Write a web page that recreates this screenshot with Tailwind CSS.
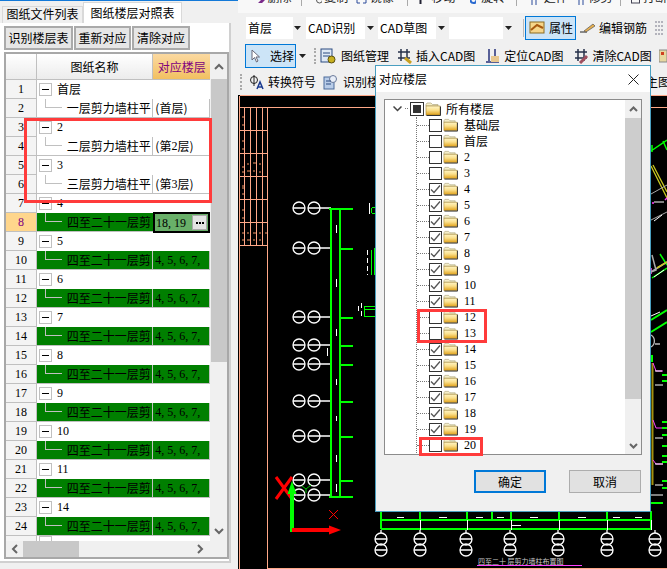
<!DOCTYPE html>
<html lang="zh">
<head>
  <meta charset="UTF-8" />
  <title>对应楼层</title>
  <script src="https://cdn.jsdelivr.net/npm/@tailwindcss/browser@4"></script>
</head>
<body class="w-[667px] h-[569px] overflow-hidden bg-[#f0f0f0] text-black text-[12px] leading-[14px] font-['Noto_Sans_CJK_SC',sans-serif]">

  <svg class="absolute w-0 h-0">
    <defs>
      <linearGradient id="fold" x1="0" y1="0" x2="0" y2="1">
        <stop offset="0" stop-color="#fff6c8" />
        <stop offset=".45" stop-color="#fbe08c" />
        <stop offset="1" stop-color="#e0a018" />
      </linearGradient>
      <symbol id="folder" viewBox="0 0 16 14">
        <path d="M1 2.500 L2 1 H6 L7.500 2.500 H13 V4 H1Z" fill="#f6eec8" stroke="#b0a880" stroke-width=".7" />
        <rect x="1" y="4" width="14" height="9" fill="url(#fold)" stroke="#a08030" stroke-width=".6" />
        <path d="M15.500 4.500 V13.500 H1.500" fill="none" stroke="#333" stroke-width="1" />
      </symbol>
    </defs>
  </svg>

  <div class="flex h-[569px]">

    <!-- left panel -->
    <div class="w-[238px] shrink-0 flex flex-col">
      <div class="h-px bg-[#1379d8] mb-px"></div>
      <div class="flex h-[21px] pl-[2px] items-end">
        <div class="w-[81px] h-[17px] bg-[#f0f0f0] border border-b-0 border-[#d9d9d9] text-center">图纸文件列表</div>
        <div class="w-[99px] h-[21px] bg-white border border-b-0 border-[#d9d9d9] text-center pt-[3px]">图纸楼层对照表</div>
      </div>
      <div class="w-[231px] h-[540px] border-r-2 border-b-2 border-[#d0d0d0] bg-white px-[4px] flex flex-col">
        <div class="flex gap-px h-[24px] mt-[3px] mb-[2px]">
          <div class="w-[69px] flex items-center justify-center bg-[#e6e6e6] border-2 border-[#aaaaaa]">识别楼层表</div>
          <div class="w-[57px] flex items-center justify-center bg-[#e6e6e6] border-2 border-[#aaaaaa]">重新对应</div>
          <div class="w-[58px] flex items-center justify-center bg-[#e6e6e6] border-2 border-[#aaaaaa]">清除对应</div>
        </div>
        <div class="w-[225px] h-[507px] border-2 border-[#a8a8a8] flex flex-col bg-[#f0f0f0]">
          <div class="flex h-[487px]">
            <div class="w-[205px] flex flex-col overflow-hidden bg-white">
              <div class="flex h-[26px] shrink-0 border-b border-[#c0c0c0]">
                <div class="w-[31px] border-r border-[#c0c0c0] bg-gradient-to-b from-white to-[#ececec]"></div>
                <div class="w-[117px] flex items-center justify-center border-r border-[#c0c0c0] bg-gradient-to-b from-white to-[#ececec]">图纸名称</div>
                <div class="w-[57px] flex items-center justify-center text-[#800080] bg-gradient-to-b from-[#fbd9a0] to-[#f2c060]">对应楼层</div>
              </div>
              <div id="rows"></div>
            </div>
            <div class="w-[16px] ml-px flex flex-col">
              <div class="h-[25px] flex items-center justify-center bg-[#f0f0f0]">
                <svg width="10" height="7" viewBox="0 0 10 7"><path d="M1 6 L5 2 L9 6" fill="none" stroke="#666" stroke-width="2" /></svg>
              </div>
              <div class="h-[283px] bg-[#c8c8c8]"></div>
              <div class="flex-1 flex items-end justify-center pb-[6px]">
                <svg width="10" height="7" viewBox="0 0 10 7"><path d="M1 1 L5 5 L9 1" fill="none" stroke="#666" stroke-width="2" /></svg>
              </div>
            </div>
          </div>
          <div class="flex items-center h-[16px] w-[205px]">
            <div class="w-[17px] flex justify-center">
              <svg width="7" height="10" viewBox="0 0 7 10"><path d="M6 1 L2 5 L6 9" fill="none" stroke="#666" stroke-width="2" /></svg>
            </div>
            <div class="w-[56px] h-full bg-[#c8c8c8]"></div>
            <div class="flex-1 flex justify-end pr-[7px]">
              <svg width="7" height="10" viewBox="0 0 7 10"><path d="M1 1 L5 5 L1 9" fill="none" stroke="#666" stroke-width="2" /></svg>
            </div>
          </div>
        </div>
      </div>
    </div>

    <!-- right side -->
    <div class="flex-1 flex flex-col min-w-0">
      <!-- row cut off by the top edge -->
      <div class="h-[13px] overflow-hidden bg-[#f8f8f8] flex items-start text-[#222]">
        <svg class="ml-[17px]" width="10" height="4"><path d="M0 3 H3 L6 0 H10 L7 3Z" fill="#7a2a8a" /></svg>
        <span class="ml-[3px] -mt-[10px] shrink-0">删除</span>
        <span class="ml-[9px] w-px h-[6px] bg-[#aaa]"></span>
        <svg class="ml-[14px]" width="7" height="4"><circle cx="3.500" cy="0" r="3" fill="none" stroke="#555" /></svg>
        <span class="ml-[2px] -mt-[10px] shrink-0">复制</span>
        <svg class="ml-[8px]" width="11" height="4"><path d="M1 0V3H4M7 3H10V0" fill="none" stroke="#2a4a9a" /></svg>
        <span class="ml-[3px] -mt-[10px] shrink-0">镜像</span>
        <span class="ml-[13px] w-px h-[6px] bg-[#aaa]"></span>
        <svg class="ml-[11px]" width="3" height="4"><path d="M1.500 0V4" stroke="#223" stroke-width="2" /></svg>
        <span class="ml-[10px] -mt-[10px] shrink-0">移动</span>
        <svg class="ml-[14px]" width="7" height="4"><circle cx="3.500" cy="0" r="3" fill="none" stroke="#2a6ad0" stroke-width="2" /></svg>
        <span class="ml-[5px] -mt-[10px] shrink-0">旋转</span>
        <span class="ml-[11px] w-px h-[6px] bg-[#aaa]"></span>
        <svg class="ml-[14px]" width="8" height="5"><path d="M1 0V5M5 0V5" stroke="#2a4a9a" /></svg>
        <span class="ml-[5px] -mt-[10px] shrink-0">延伸</span>
        <svg class="ml-[10px]" width="7" height="5"><path d="M1 0V5M5 0V5" stroke="#2a4a9a" /></svg>
        <span class="ml-[4px] -mt-[10px] shrink-0">修剪</span>
        <span class="ml-[8px] w-px h-[6px] bg-[#aaa]"></span>
        <svg class="ml-[10px]" width="9" height="4"><rect x=".5" y="-3" width="8" height="6" fill="none" stroke="#445" /></svg>
        <span class="ml-[3px] -mt-[10px] shrink-0">打断</span>
      </div>

      <!-- combo row -->
      <div class="h-[29px] bg-[#f0f0f0] flex items-center pl-[8px] whitespace-nowrap">
        <div class="w-[56px] h-[22px] bg-white flex items-center pl-[2px] justify-between">首层<span class="w-[9px] h-full bg-[#f0f0f0] flex items-center justify-center"><svg width="7" height="4"><path d="M0 0H7L3.500 4Z" fill="#222" /></svg></span></div>
        <div class="w-[69px] h-[22px] ml-[4px] bg-white flex items-center pl-[2px] justify-between">CAD识别<span class="w-[10px] h-full bg-[#f0f0f0] flex items-center justify-center"><svg width="7" height="4"><path d="M0 0H7L3.500 4Z" fill="#222" /></svg></span></div>
        <div class="w-[69px] h-[22px] ml-[3px] bg-white flex items-center pl-[2px] justify-between">CAD草图<span class="w-[11px] h-full bg-[#f0f0f0] flex items-center justify-center"><svg width="7" height="4"><path d="M0 0H7L3.500 4Z" fill="#222" /></svg></span></div>
        <div class="w-[65px] h-[22px] ml-[2px] bg-white flex justify-end"><span class="w-[11px] h-full bg-[#f0f0f0] flex items-center justify-center"><svg width="7" height="4"><path d="M0 0H7L3.500 4Z" fill="#222" /></svg></span></div>
        <div class="w-px h-[18px] ml-[9px] bg-[#bbb]"></div>
        <div class="w-[51px] h-[24px] ml-px border border-[#0078d7] bg-[#cce4f7] flex items-center pl-[3px] gap-[4px]">
          <svg width="16" height="15" viewBox="0 0 16 15"><rect x="1" y="2" width="14" height="11" fill="#f6d68a" stroke="#8a6a20" /><path d="M2 10 L8 5 L14 8" fill="none" stroke="#a85a10" stroke-width="2" /></svg>
          属性
        </div>
        <svg class="ml-[3px]" width="17" height="12" viewBox="0 0 17 12"><path d="M1 10 H8" stroke="#222" /><path d="M5 9 L14 2 L16 4 L7 10Z" fill="#e8b050" stroke="#555" stroke-width=".7" /></svg>
        <span class="ml-[3px]">编辑钢筋</span>
        <svg class="ml-[7px] shrink-0" width="10" height="14" viewBox="0 0 10 14"><path d="M1 1H9M1 5H9M1 9H9M1 13H9" stroke="#778" stroke-dasharray="2 1" /></svg>
      </div>

      <!-- select row -->
      <div class="h-[27px] bg-[#f0f0f0] flex items-center pl-[7px] whitespace-nowrap">
        <div class="w-[51px] h-[24px] border border-[#0078d7] bg-[#cce4f7] flex items-center pl-[5px] gap-[9px]">
          <svg width="10" height="14" viewBox="0 0 10 14"><path d="M1 1 V11 L3.500 8.500 L5.500 13 L7 12 L5 8 H8.500Z" fill="#fff" stroke="#667" /></svg>
          选择
        </div>
        <svg class="ml-[3px]" width="7" height="4"><path d="M0 0H7L3.500 4Z" fill="#222" /></svg>
        <div class="w-[3px] h-[16px] ml-[8px] border-l-2 border-dotted border-[#aaa]"></div>
        <svg class="ml-[3px]" width="16" height="16" viewBox="0 0 16 16"><rect x="1" y="1" width="11" height="13" fill="#dfe9f5" stroke="#2a4a80" /><path d="M3 5H10M3 8H10" stroke="#2a4a80" /><circle cx="11.500" cy="11.500" r="3.500" fill="#c8b020" stroke="#5a5010" /></svg>
        <span class="ml-[5px]">图纸管理</span>
        <svg class="ml-[8px]" width="15" height="16" viewBox="0 0 15 16"><path d="M4 1V13M10 1V13M1 4H13M1 10H13" stroke="#26304a" stroke-width="1.500" /><path d="M8 10 L14 15" stroke="#c8a020" stroke-width="3" /></svg>
        <span class="ml-[4px]">插入CAD图</span>
        <svg class="ml-[10px]" width="15" height="16" viewBox="0 0 15 16"><path d="M4 1V13M10 1V13M1 14H14" stroke="#26307a" stroke-width="1.500" /><rect x="6" y="8" width="8" height="6" fill="#e8c890" /></svg>
        <span class="ml-[4px]">定位CAD图</span>
        <svg class="ml-[11px]" width="15" height="16" viewBox="0 0 15 16"><path d="M4 1V13M10 1V13M1 4H13M1 10H13" stroke="#26304a" stroke-width="1.500" /><path d="M13 8 L6 15" stroke="#a05060" stroke-width="3" /></svg>
        <span class="ml-[3px]">清除CAD图</span>
        <svg class="ml-[7px] shrink-0" width="8" height="14" viewBox="0 0 8 14"><rect x="0" y="1" width="8" height="12" fill="#e8d8a0" stroke="#888" /><rect x="2" y="3" width="3" height="3" fill="#d04020" /></svg>
      </div>

      <!-- symbol row -->
      <div class="h-[26px] bg-[#f0f0f0] flex items-center pl-[2px] whitespace-nowrap">
        <div class="w-[3px] h-[16px] border-l-2 border-dotted border-[#aaa]"></div>
        <svg class="ml-[6px]" width="15" height="16" viewBox="0 0 15 16"><circle cx="5" cy="6" r="3.500" fill="none" stroke="#222" /><path d="M5 1V12" stroke="#222" /><path d="M8 15 L11 8 L14 15 M9 13H13" fill="none" stroke="#1a3a90" stroke-width="1.500" /></svg>
        <span class="ml-[4px]">转换符号</span>
        <svg class="ml-[7px]" width="16" height="16" viewBox="0 0 16 16"><rect x="1" y="3" width="10" height="12" fill="#b8cce8" stroke="#4a6a9a" /><circle cx="10" cy="5" r="3.500" fill="#e8eef8" stroke="#6a7a9a" /><path d="M3 7H8M3 10H8" stroke="#2a4a80" /></svg>
        <span class="ml-[4px]">识别楼</span>
        <span class="ml-auto -mr-[3px]">主图</span>
      </div>

      <!-- CAD drawing -->
      <svg class="flex-1 w-full bg-black" viewBox="238 95 429 474" xmlns="http://www.w3.org/2000/svg" shape-rendering="crispEdges">
        <g stroke="#ffa888" fill="none">
          <path d="M239.500 95.500H667M239.500 95.500V569M239.500 107.500H667M267.500 107.500V568.500H667" />
          <path d="M244.500 107V245M250.500 107V245M256.500 107V245M262.500 107V245" />
          <path d="M240 130.500H267M240 153.500H267M240 176.500H267M240 199.500H267M240 222.500H267M240 245.500H267" />
        </g>
        <g fill="#7a4a32">
          <rect x="242" y="116" width="2" height="2" /><rect x="242" y="124" width="2" height="2" />
          <rect x="242" y="140" width="2" height="2" /><rect x="242" y="148" width="2" height="2" />
          <rect x="242" y="166" width="2" height="2" /><rect x="247" y="163" width="2" height="2" /><rect x="253" y="162" width="3" height="2" /><rect x="259" y="163" width="2" height="2" /><rect x="242" y="171" width="2" height="2" /><rect x="247" y="170" width="3" height="2" /><rect x="253" y="170" width="2" height="2" /><rect x="259" y="171" width="2" height="2" />
          <rect x="242" y="185" width="2" height="4" /><rect x="242" y="193" width="2" height="2" />
          <rect x="242" y="209" width="2" height="2" /><rect x="242" y="217" width="2" height="2" />
          <rect x="242" y="232" width="2" height="2" /><rect x="247" y="232" width="2" height="2" /><rect x="253" y="232" width="3" height="2" /><rect x="259" y="232" width="2" height="2" /><rect x="265" y="232" width="2" height="2" /><rect x="242" y="239" width="2" height="2" /><rect x="247" y="239" width="3" height="2" /><rect x="253" y="239" width="2" height="2" /><rect x="259" y="239" width="2" height="2" />
        </g>
        <g id="axes" stroke="#fff" fill="none" shape-rendering="auto" stroke-width="1.300"></g>
        <path d="M330.500 208V497M339.500 208V497" stroke="#00ff00" stroke-width="2" />
        <path d="M329 208.500H353M329 496.500H353" stroke="#00ff00" stroke-width="2" />
        <g stroke="#00ff00" stroke-width="2">
          <path d="M340 248.500H353M340 317.500H353M340 345.500H353M340 364.500H353M340 401.500H353M340 436.500H353M340 480.500H353" />
        </g>
        <path d="M336.500 225V233M336.500 279V287M336.500 329V336M336.500 379V385M336.500 416V421M336.500 455V462M336.500 484V492M327.500 348V356M369.500 203V214" stroke="#fff" stroke-width="1" />
        <!-- bits left of the dialog -->
        <g stroke="#00ff00" fill="none">
          <path d="M371.500 208V213M372 207.500H375M372 213.500H375M371.500 250V275M374.500 248V275M365 306.500H375M365 309.500H375M364.500 306V317M365 316.500H375" />
        </g>
        <path d="M367.500 250V275M358.500 306V313M361.500 303V316" stroke="#fff" stroke-dasharray="5 3" />
        <!-- origin -->
        <g shape-rendering="auto">
          <path d="M276 477 L292 499 M292 477 L276 499" stroke="#ff0000" stroke-width="3" />
          <path d="M292 532V488" stroke="#00ff00" stroke-width="4" />
          <path d="M287.500 494 L292 481 L296.500 494Z" fill="#00ff00" />
          <path d="M292 530H332" stroke="#ff0000" stroke-width="4" />
          <path d="M329 525.500 L341 530 L329 534.500Z" fill="#ff0000" />
          <path d="M329 510 L338 519 M338 510 L329 519" stroke="#ff0000" />
          <path d="M302 486 L306 489 L311 485 M306 489V493" stroke="#00c000" fill="none" />
        </g>
        <!-- right edge behind the dialog -->
        <g shape-rendering="auto" fill="none">
          <path d="M651 151 L667 140 M663 141 L667 150 M652 145V152" stroke="#00ff00" stroke-width="1.500" />
          <path d="M651 166 L667 198 M653 165 L667 192" stroke="#c8c820" stroke-width="1.300" />
          <path d="M651 194 L667 185 M651 220 L667 212" stroke="#aaa" />
          <path d="M654 202H664M654 221L662 215" stroke="#fff" />
          <path d="M652 203H654M665 200L667 198M651 268V274" stroke="#ff40ff" stroke-width="1.500" />
          <path d="M652 278 L667 268 M660 254 L667 265" stroke="#00ff00" stroke-width="1.500" />
          <path d="M652 255 L656 270 L651 272 L667 262" stroke="#aaa" stroke-width="1.500" />
          <path d="M657 268 L667 262" stroke="#c8c820" stroke-width="1.500" />
          <path d="M654 277 L664 270" stroke="#fff" />
          <path d="M651 320 L667 310 M651 332 L667 322" stroke="#00ff00" stroke-width="2" />
          <path d="M651 316 L660 312" stroke="#fff" />
          <path d="M651 335 A7 7 0 0 1 651 347 M655 344H660" stroke="#bbb" stroke-width="1.300" />
          <path d="M652 355V362" stroke="#00ff00" stroke-width="2" />
          <path d="M652.500 363V485" stroke="#a09010" stroke-width="2" />
          <path d="M653 363L656 371H663M653 420L656 428H663M653 460L656 464H663" stroke="#ff40ff" />
          <path d="M655 371H662M655 385H663M655 438H663M655 464H663M655 485H663M651 495H663" stroke="#fff" />
        </g>
        <g fill="#00ff00">
          <rect x="662" y="374" width="5" height="2" /><rect x="662" y="380" width="5" height="2" /><rect x="662" y="421" width="5" height="2" /><rect x="662" y="427" width="5" height="2" /><rect x="662" y="434" width="5" height="2" /><rect x="662" y="445" width="5" height="2" /><rect x="662" y="455" width="5" height="2" /><rect x="662" y="461" width="5" height="2" /><rect x="662" y="480" width="5" height="2" /><rect x="662" y="487" width="5" height="2" /><rect x="651" y="502" width="12" height="2" />
        </g>
        <!-- bottom frame -->
        <g stroke="#00ff00" stroke-width="2" fill="none">
          <path d="M381 520H651M381 529H651" />
          <path d="M381 511V529M420 511V520M467 511V520M492 511V520M511 511V520M559 511V520M607 511V520M651 511V529" />
        </g>
        <path d="M420 520V530M467 520V530M511 520V530M559 520V530M607 520V530M651 520V530" stroke="#fff" fill="none" />
        <path d="M397 517H404M439 517H447M476 517H483M497 517H504M530 517H538M578 517H586M613 517H620M635 517H642M512 525H521" stroke="#fff" fill="none" />
        <g id="bottomAxes" stroke="#fff" fill="none" shape-rendering="auto" stroke-width="1.300"></g>
        <text x="478" y="564" fill="#c8c8c8" font-size="7" font-family="Noto Sans CJK SC, sans-serif">四至二十 层剪力墙柱布置图</text>
        <path d="M477 565.500H582" stroke="#ff40ff" />
      </svg>
    </div>
  </div>

  <!-- red marks over the table -->
  <div class="absolute left-[24px] top-[118px] w-[188px] h-[85px] border-[3px] border-[#ff3b3b]"></div>

  <!-- dialog -->
  <div class="absolute left-[375px] top-[65px] w-[276px] h-[447px] border border-[#4a9fc0] bg-[#f0f0f0] flex flex-col">
    <div class="h-[26px] bg-white flex items-center justify-between pl-[3px] pr-[11px] shrink-0">
      对应楼层
      <svg width="11" height="11" viewBox="0 0 11 11"><path d="M.5 .5 L10.500 10.500 M10.500 .5 L.5 10.500" stroke="#222" /></svg>
    </div>
    <div class="mt-[7px] ml-[8px] w-[258px] h-[356px] border border-[#8c8c8c] bg-white flex overflow-hidden shrink-0">
      <div class="w-[240px] overflow-hidden">
        <div class="flex items-center h-[17px]">
          <svg class="ml-[8px]" width="9" height="6" viewBox="0 0 9 6"><path d="M.5 .5 L4.500 4.500 L8.500 .5" fill="none" stroke="#444" stroke-width="1.500" /></svg>
          <div class="w-[3px] ml-[3px] border-t border-dotted border-[#777]"></div>
          <div class="w-[14px] h-[14px] ml-[2px] border border-[#333] flex items-center justify-center"><div class="w-[8px] h-[8px] bg-[#333]"></div></div>
          <svg class="ml-px" width="16" height="14"><use href="#folder" /></svg>
          <span class="ml-[5px]">所有楼层</span>
        </div>
        <div id="tree" class="ml-[31px] border-l border-dotted border-[#777]"></div>
      </div>
      <div class="w-[16px] ml-[2px] flex flex-col bg-[#f0f0f0]">
        <div class="h-[18px] flex items-center justify-center">
          <svg width="9" height="6" viewBox="0 0 9 6"><path d="M1 5 L4.500 1.500 L8 5" fill="none" stroke="#666" stroke-width="2" /></svg>
        </div>
        <div class="h-[281px] bg-[#cdcdcd]"></div>
        <div class="flex-1 flex items-end justify-center pb-[5px]">
          <svg width="9" height="6" viewBox="0 0 9 6"><path d="M1 1 L4.500 4.500 L8 1" fill="none" stroke="#666" stroke-width="2" /></svg>
        </div>
      </div>
    </div>
    <div class="flex mt-[15px] ml-[98px] gap-[23px]">
      <div class="w-[72px] h-[23px] bg-[#e1e1e1] border-2 border-[#0078d7] flex items-center justify-center">确定</div>
      <div class="w-[72px] h-[23px] bg-[#e1e1e1] border border-[#adadad] flex items-center justify-center">取消</div>
    </div>
  </div>

  <!-- red marks over the tree -->
  <div class="absolute left-[417px] top-[309px] w-[70px] h-[34px] border-[3px] border-[#ff3b3b]"></div>
  <div class="absolute left-[419px] top-[437px] w-[64px] h-[19px] border-[3px] border-[#ff3b3b]"></div>

  <script>
    const names = ['首层', '2', '3', '4', '5', '6', '7', '8', '9', '10', '11', '14'];
    const minus = `<span class="w-[13px] h-[13px] ml-[2px] border border-[#c0c0c0] bg-white flex items-center justify-center shrink-0"><span class="w-[7px] h-px bg-black"></span></span>`;
    // Liberation Serif digits are 6px wide at 12px, like the bitmap font in the picture
    const digits = "font-['Liberation_Serif',serif]";
    let html = '';

    names.forEach((name, i) => {
      const groupNo = i * 2 + 1;
      const childNo = groupNo + 1;
      const isNum = i > 0;
      html += `<div class="flex h-[19px]">
        <div class="w-[31px] flex items-center justify-center border-r border-b border-[#c0c0c0] bg-[#f4f4f4] ${digits}">${groupNo}</div>
        <div class="flex-1 flex items-center pb-px">${minus}<span class="ml-[5px] ${isNum ? digits : ''}">${name}</span></div>
      </div>`;

      let label = '四至二十一层剪', floor = `<span class="${digits}">4, 5, 6, 7,</span>`, cellClass = 'bg-[#007f00]';
      if (i === 0) { label = '一层剪力墙柱平'; floor = '(首层)'; cellClass = 'bg-white'; }
      if (i === 1) { label = '二层剪力墙柱平'; floor = '(第<span class="' + digits + '">2</span>层)'; cellClass = 'bg-white'; }
      if (i === 2) { label = '三层剪力墙柱平'; floor = '(第<span class="' + digits + '">3</span>层)'; cellClass = 'bg-white'; }

      const active = childNo === 8;
      const numCell = active
        ? `<div class="w-[31px] flex items-center justify-center border-r border-b border-[#c0c0c0] bg-[#ffd68c] text-[#800080] ${digits}">8</div>`
        : `<div class="w-[31px] flex items-center justify-center border-r border-b border-[#c0c0c0] bg-[#f4f4f4] ${digits}">${childNo}</div>`;
      const floorCell = active
        ? `<div class="w-[57px] h-[21px] -mt-px -ml-px border-2 border-black bg-[#69b069] flex items-center pl-[1px] pr-px justify-between relative ${digits}">18, 19<span class="w-[15px] h-[15px] bg-[#e4e4e4] border border-[#aaa] flex items-center justify-center gap-px"><span class="w-[2px] h-[2px] bg-black"></span><span class="w-[2px] h-[2px] bg-black"></span><span class="w-[2px] h-[2px] bg-black"></span></span></div>`
        : `<div class="w-[57px] ${cellClass} flex items-center pl-[2px] border-b border-r border-[#c0c0c0] overflow-hidden whitespace-nowrap">${floor}</div>`;

      html += `<div class="flex h-[19px]">
        ${numCell}
        <div class="w-[117px] ${cellClass} flex items-center relative border-r border-b border-[#c0c0c0] whitespace-nowrap">
          <span class="absolute left-[8px] top-0 w-[17px] h-[9px] border-l border-b border-[#c0c0c0]"></span>
          <span class="ml-[30px]">${label}</span>
        </div>
        ${floorCell}
      </div>`;
    });
    html += `<div class="flex h-[19px]"><div class="w-[31px] border-r border-[#c0c0c0] bg-[#f4f4f4]"></div><div class="flex-1 flex items-start">${minus}</div></div>`;
    document.getElementById('rows').innerHTML = html;

    // floor tree, unchecked ones are listed here
    const off = ['基础层', '首层', '2', '3', '12', '13', '20'];
    const floors = ['基础层', '首层'];
    for (let n = 2; n <= 20; n++) floors.push(String(n));
    document.getElementById('tree').innerHTML = floors.map((f) => {
      const check = off.includes(f) ? '' : `<svg width="11" height="11" viewBox="0 0 11 11"><path d="M1 5.500 L4 8.500 L10 1.500" fill="none" stroke="#555" stroke-width="1.300" /></svg>`;
      const numeric = /^\d+$/.test(f);
      return `<div class="flex items-center h-[16px]">
        <span class="w-[12px] border-t border-dotted border-[#777]"></span>
        <span class="w-[13px] h-[13px] border border-[#333] flex items-center justify-center shrink-0">${check}</span>
        <svg class="ml-px shrink-0" width="15" height="14"><use href="#folder" /></svg>
        <span class="ml-[6px] ${numeric ? digits : ''}">${f}</span>
      </div>`;
    }).join('');

    // grid axis bubbles on the drawing
    const pair = (a, b, y) => `<circle cx="${a}" cy="${y}" r="6" /><circle cx="${b}" cy="${y}" r="6" /><path d="M${a - 6} ${y}H${a + 6}M${b - 6} ${y}H${b + 6}M${b + 6} ${y}H331" />`;
    document.getElementById('axes').innerHTML = [208, 248, 317, 345, 364, 401, 436, 480, 495].map((y) => pair(299, 314, y)).join('');
    document.getElementById('bottomAxes').innerHTML = [381, 420, 466, 510, 558, 607, 655].map((x) =>
      `<circle cx="${x}" cy="539" r="6" /><circle cx="${x}" cy="550" r="6" /><path d="M${x - 6} 539H${x + 6}M${x - 6} 550H${x + 6}M${x} 530V533" />`
    ).join('');
  </script>
</body>
</html>
